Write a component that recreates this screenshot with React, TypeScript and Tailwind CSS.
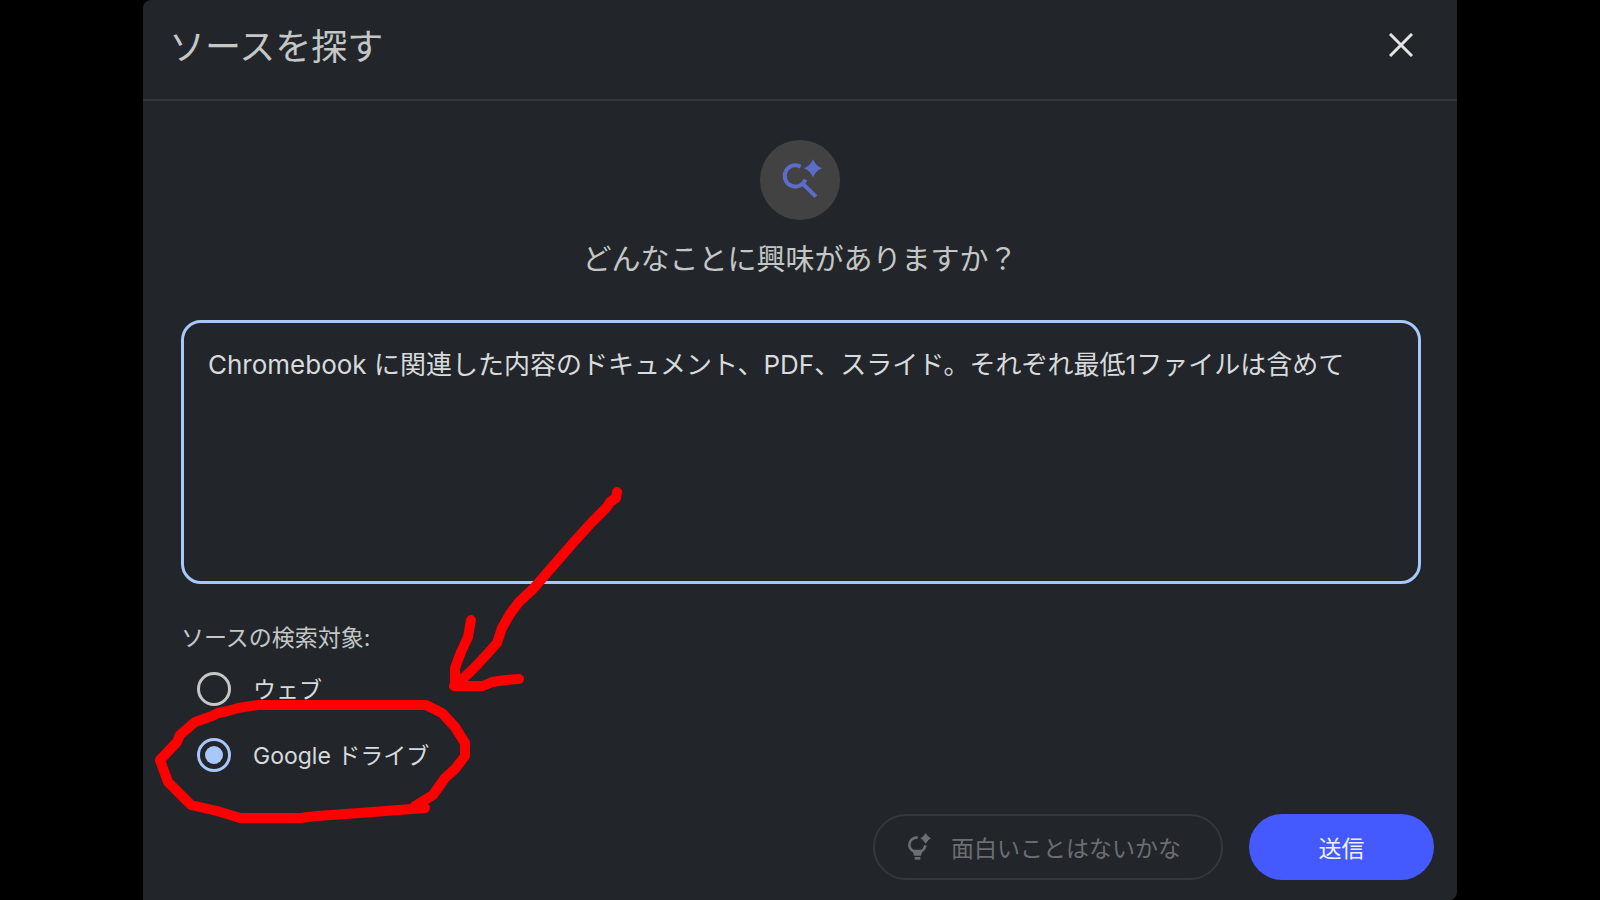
import { useState } from 'react';

const targets = [
  { id: 'web', label: 'ウェブ' },
  { id: 'drive', label: 'Google ドライブ' },
];

function SearchSparkIcon() {
  return (
    <svg viewBox="0 0 120 120" className="size-10 overflow-visible text-[#5c6cc9]" fill="none" aria-hidden="true">
      <path d="M62 20 A32 32 0 1 0 76 59" stroke="currentColor" strokeWidth="12" />
      <path d="M66 69 L108 110" stroke="currentColor" strokeWidth="12" />
      <path d="M99 -2 Q107 18 126 25 Q107 32 99 52 Q91 32 72 25 Q91 18 99 -2Z" fill="currentColor" />
    </svg>
  );
}

function BulbSparkIcon() {
  return (
    <svg viewBox="0 0 72 84" className="h-7 w-6" fill="none" aria-hidden="true">
      <path d="M32 13 C16 13 7 24 7 35 C7 44 12 50 19 54 H44 C50 50 54 45 55 37" stroke="currentColor" strokeWidth="8" />
      <path d="M17 54 H46 L42 68 H21Z" fill="currentColor" />
      <path d="M23 72 H40 V80 H23Z" fill="currentColor" />
      <path d="M56 0 Q61 11 72 16 Q61 21 56 32 Q51 21 40 16 Q51 11 56 0Z" fill="currentColor" />
    </svg>
  );
}

// Hand-drawn arrow and ring pointing at the Drive option
function Marker() {
  return (
    <svg
      viewBox="0 0 500 900"
      className="pointer-events-none absolute top-0 left-0 h-[900px] w-[500px]"
      fill="none"
      stroke="#ff0000"
      strokeWidth="10"
      strokeLinecap="round"
      strokeLinejoin="round"
      aria-hidden="true"
    >
      <path d="M474 492 L473 498 L467 502 L464 507 L449 522 L430 543 L410 566 L390 589 L376 602 L367 614 L359 628 L354 643 L345 653 L335 664 L327 672 L312 686" />
      <path d="M328 620 L325 637 L318 652 L312 668 L312 686" />
      <path d="M311 686 L340 686 L349 682 L363 680 L376 679" />
      <path d="M282 808 L230 812 L174 816 L157 818 L97 818 L74 811 L48 805 L25 782 L21 771 L17 760 L34 742 L37 735 L52 722 L69 716 L75 713 L85 711 L95 708 L115 705 L283 705 L299 713 L312 727 L322 743 L322 756 L312 769 L302 778 L290 795 L272 806" />
    </svg>
  );
}

export default function App() {
  const [query, setQuery] = useState(
    'Chromebook に関連した内容のドキュメント、PDF、スライド。それぞれ最低1ファイルは含めて'
  );
  const [target, setTarget] = useState('drive');

  return (
    <div className="min-h-screen bg-black font-['Inter','Noto_Sans_CJK_JP',sans-serif]">
      <main className="relative mx-auto flex min-h-screen w-full max-w-[1314px] flex-col rounded-tl-lg rounded-br-lg bg-[#22262b] text-[#c4c7c5]">
        <header className="flex h-[101px] items-center justify-between border-b-2 border-[#33373c] pr-9 pb-[10px] pl-[26px]">
          <h1 className="pt-1 text-[36px] leading-[52px]">ソースを探す</h1>
          <button type="button" aria-label="閉じる" className="flex size-10 items-center justify-center text-[#e3e3e3]">
            <svg viewBox="0 0 24 24" className="size-6" stroke="currentColor" strokeWidth="3" aria-hidden="true">
              <path d="M1 1 L23 23 M23 1 L1 23" />
            </svg>
          </button>
        </header>

        <form className="flex grow flex-col" onSubmit={(e) => e.preventDefault()}>
          <div className="flex flex-col items-center pt-[39px]">
            <div className="flex size-20 items-center justify-center rounded-full bg-[#424242]">
              <SearchSparkIcon />
            </div>
            <label htmlFor="query" className="mt-[18px] text-[29px] leading-[44px]">
              どんなことに興味がありますか？
            </label>
          </div>

          <div className="mt-[38px] flex pr-9 pl-[38px]">
            <textarea
              id="query"
              value={query}
              onChange={(e) => setQuery(e.target.value)}
              className="h-[264px] w-full resize-none rounded-[20px] border-3 border-[#a8c7fa] bg-transparent px-6 py-[22px] text-[26px] leading-10 text-[#d8dadc] outline-none"
            />
          </div>

          <fieldset className="mt-[34px] pr-9 pl-[38px]">
            <legend className="text-[23px] leading-10">ソースの検索対象:</legend>
            {targets.map((t) => (
              <label key={t.id} className="flex h-[66px] items-center gap-[22px] pb-1 pl-4 text-[23px] text-[#d8dadc]">
                <input
                  type="radio"
                  name="target"
                  value={t.id}
                  checked={target === t.id}
                  onChange={() => setTarget(t.id)}
                  className="size-[34px] appearance-none rounded-full border-3 border-[#c4c7c5] bg-clip-content p-[5px] checked:border-[#a8c7fa] checked:bg-[#a8c7fa]"
                />
                <span className="pt-[2px]">{t.label}</span>
              </label>
            ))}
          </fieldset>

          <div className="mt-auto flex justify-end gap-[26px] pr-[23px] pb-5 text-[23px]">
            <button
              type="button"
              disabled
              className="flex h-[66px] items-center gap-5 rounded-full border-2 border-[#34383d] pr-10 pl-8 text-[#6b6f73]"
            >
              <BulbSparkIcon />
              <span className="pt-1">面白いことはないかな</span>
            </button>
            <button type="submit" className="h-[66px] w-[185px] rounded-full bg-[#445aff] pt-1 text-[#eef0ff]">
              送信
            </button>
          </div>
        </form>

        <Marker />
      </main>
    </div>
  );
}
